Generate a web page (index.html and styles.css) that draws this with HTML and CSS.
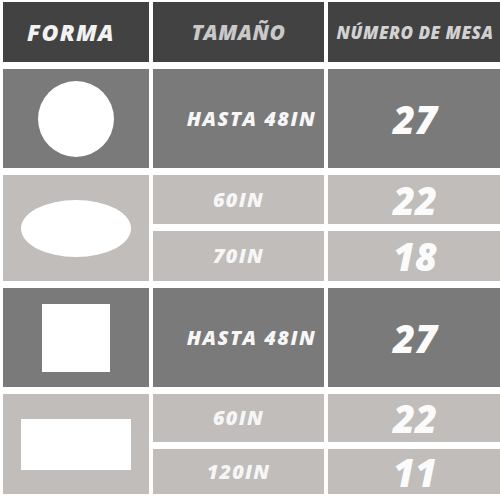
FILE: index.html
```html
<!DOCTYPE html>
<html>
<head>
<meta charset="utf-8">
<link rel="stylesheet" href="styles.css">
</head>
<body>
<div class="table">
  <div class="cell head"><span class="h1">FORMA</span></div>
  <div class="cell head"><span class="h2">TAMAÑO</span></div>
  <div class="cell head"><span class="h3">NÚMERO DE MESA</span></div>

  <div class="cell dark"><div class="circle"></div></div>
  <div class="cell dark"><span class="size long">HASTA 48IN</span></div>
  <div class="cell dark"><span class="num">27</span></div>

  <div class="cell light span2"><div class="oval"></div></div>
  <div class="cell light"><span class="size">60IN</span></div>
  <div class="cell light"><span class="num">22</span></div>
  <div class="cell light"><span class="size">70IN</span></div>
  <div class="cell light"><span class="num">18</span></div>

  <div class="cell dark"><div class="square"></div></div>
  <div class="cell dark"><span class="size long">HASTA 48IN</span></div>
  <div class="cell dark"><span class="num">27</span></div>

  <div class="cell light span2"><div class="rect"></div></div>
  <div class="cell light"><span class="size">60IN</span></div>
  <div class="cell light"><span class="num">22</span></div>
  <div class="cell light"><span class="size">120IN</span></div>
  <div class="cell light"><span class="num">11</span></div>
</div>
</body>
</html>
```
FILE: styles.css
```css
html, body {
  margin: 0;
  padding: 0;
  background: #ffffff;
}
body {
  padding: 2px 0 0 3px;
  font-family: "Open Sans", "Noto Sans", sans-serif;
}
.table {
  display: grid;
  grid-template-columns: 146px 171px 172px;
  grid-template-rows: 60px 99px 49px 50px 99px 48px 45px;
  column-gap: 4px;
  row-gap: 7px;
}
.cell {
  display: flex;
  align-items: center;
  justify-content: center;
}
.span2 {
  grid-row: span 2;
}
.head { background: #424242; }
.dark { background: #7a7a7a; }
.light { background: #c0bdba; }

.h1, .h2, .h3, .size, .num {
  display: block;
  font-style: italic;
  font-weight: 800;
  line-height: 1;
}
.h1 {
  color: #f2f2f2;
  font-size: 23px;
  letter-spacing: 1.3px;
  margin-right: 10px;
}
.h2 {
  color: #c9c9c9;
  font-size: 21px;
  letter-spacing: 0.5px;
}
.h3 {
  color: #d2d2d2;
  font-size: 17px;
  letter-spacing: 0.5px;
  margin-left: 2px;
}
.size {
  color: #f6f6f6;
  font-size: 20px;
  letter-spacing: 1.2px;
}
.size.long {
  margin-left: 26px;
  letter-spacing: 1.5px;
}
.num {
  color: #fbfbfb;
  font-size: 38px;
  height: 36px;
  line-height: 36px;
  margin-left: 2px;
}
.circle {
  width: 76px;
  height: 76px;
  border-radius: 50%;
  background: #ffffff;
}
.oval {
  width: 110px;
  height: 57px;
  border-radius: 50%;
  background: #ffffff;
}
.square {
  width: 68px;
  height: 68px;
  background: #ffffff;
}
.rect {
  width: 110px;
  height: 51px;
  background: #ffffff;
}
```
